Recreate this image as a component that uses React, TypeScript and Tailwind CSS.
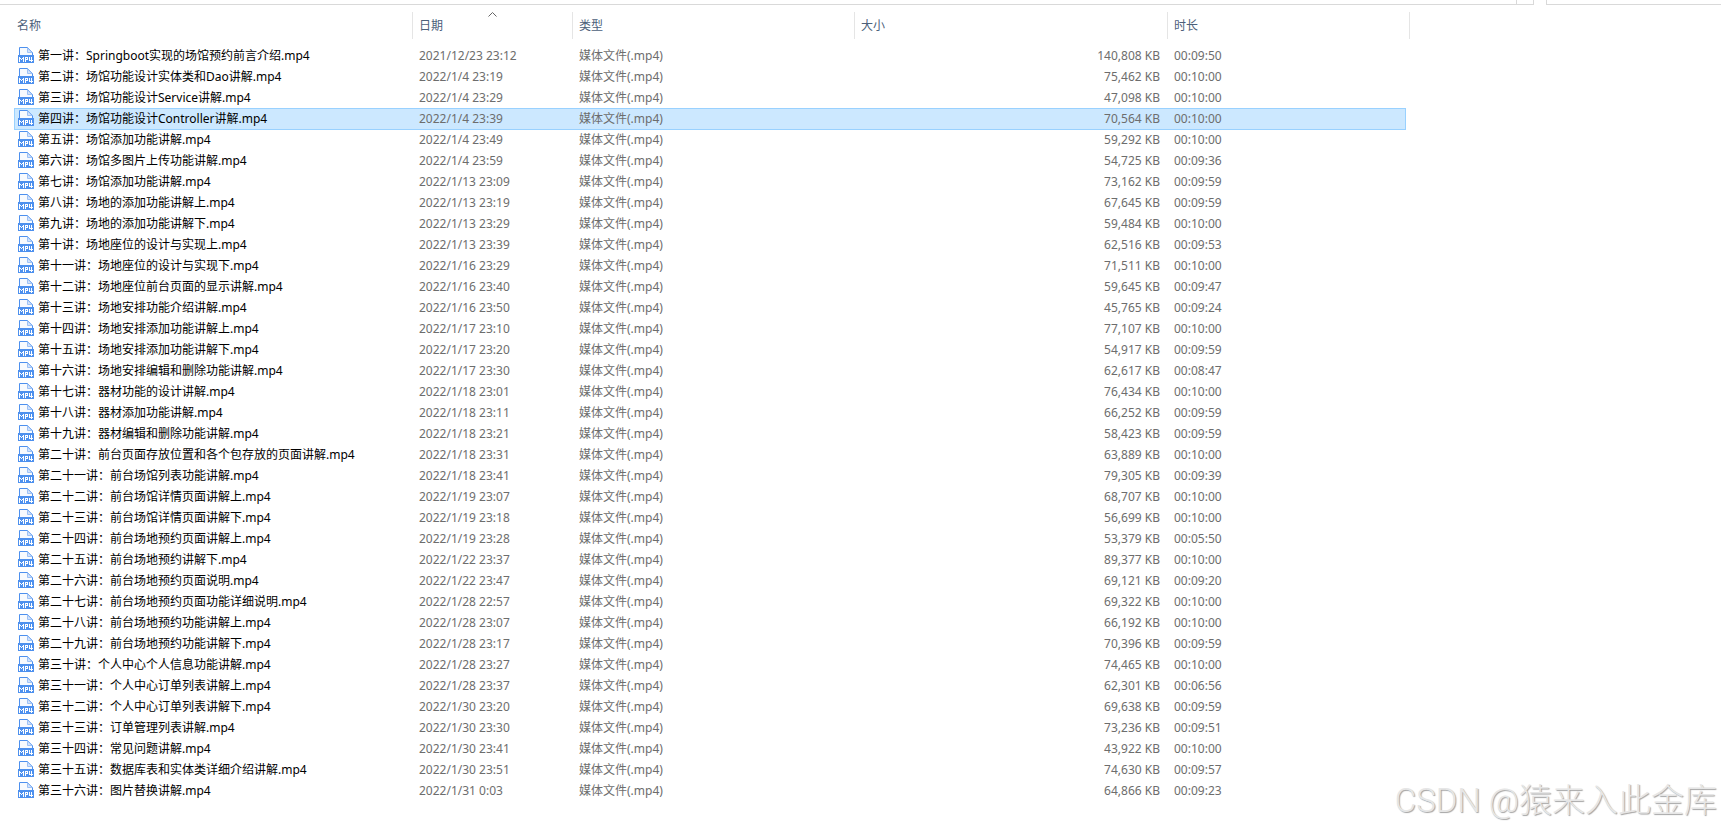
import { useState } from 'react';

interface VideoFile {
  name: string;
  date: string;
  size: string;
  duration: string;
}

const files: VideoFile[] = [
  { name: '第一讲：Springboot实现的场馆预约前言介绍.mp4', date: '2021/12/23 23:12', size: '140,808 KB', duration: '00:09:50' },
  { name: '第二讲：场馆功能设计实体类和Dao讲解.mp4', date: '2022/1/4 23:19', size: '75,462 KB', duration: '00:10:00' },
  { name: '第三讲：场馆功能设计Service讲解.mp4', date: '2022/1/4 23:29', size: '47,098 KB', duration: '00:10:00' },
  { name: '第四讲：场馆功能设计Controller讲解.mp4', date: '2022/1/4 23:39', size: '70,564 KB', duration: '00:10:00' },
  { name: '第五讲：场馆添加功能讲解.mp4', date: '2022/1/4 23:49', size: '59,292 KB', duration: '00:10:00' },
  { name: '第六讲：场馆多图片上传功能讲解.mp4', date: '2022/1/4 23:59', size: '54,725 KB', duration: '00:09:36' },
  { name: '第七讲：场馆添加功能讲解.mp4', date: '2022/1/13 23:09', size: '73,162 KB', duration: '00:09:59' },
  { name: '第八讲：场地的添加功能讲解上.mp4', date: '2022/1/13 23:19', size: '67,645 KB', duration: '00:09:59' },
  { name: '第九讲：场地的添加功能讲解下.mp4', date: '2022/1/13 23:29', size: '59,484 KB', duration: '00:10:00' },
  { name: '第十讲：场地座位的设计与实现上.mp4', date: '2022/1/13 23:39', size: '62,516 KB', duration: '00:09:53' },
  { name: '第十一讲：场地座位的设计与实现下.mp4', date: '2022/1/16 23:29', size: '71,511 KB', duration: '00:10:00' },
  { name: '第十二讲：场地座位前台页面的显示讲解.mp4', date: '2022/1/16 23:40', size: '59,645 KB', duration: '00:09:47' },
  { name: '第十三讲：场地安排功能介绍讲解.mp4', date: '2022/1/16 23:50', size: '45,765 KB', duration: '00:09:24' },
  { name: '第十四讲：场地安排添加功能讲解上.mp4', date: '2022/1/17 23:10', size: '77,107 KB', duration: '00:10:00' },
  { name: '第十五讲：场地安排添加功能讲解下.mp4', date: '2022/1/17 23:20', size: '54,917 KB', duration: '00:09:59' },
  { name: '第十六讲：场地安排编辑和删除功能讲解.mp4', date: '2022/1/17 23:30', size: '62,617 KB', duration: '00:08:47' },
  { name: '第十七讲：器材功能的设计讲解.mp4', date: '2022/1/18 23:01', size: '76,434 KB', duration: '00:10:00' },
  { name: '第十八讲：器材添加功能讲解.mp4', date: '2022/1/18 23:11', size: '66,252 KB', duration: '00:09:59' },
  { name: '第十九讲：器材编辑和删除功能讲解.mp4', date: '2022/1/18 23:21', size: '58,423 KB', duration: '00:09:59' },
  { name: '第二十讲：前台页面存放位置和各个包存放的页面讲解.mp4', date: '2022/1/18 23:31', size: '63,889 KB', duration: '00:10:00' },
  { name: '第二十一讲：前台场馆列表功能讲解.mp4', date: '2022/1/18 23:41', size: '79,305 KB', duration: '00:09:39' },
  { name: '第二十二讲：前台场馆详情页面讲解上.mp4', date: '2022/1/19 23:07', size: '68,707 KB', duration: '00:10:00' },
  { name: '第二十三讲：前台场馆详情页面讲解下.mp4', date: '2022/1/19 23:18', size: '56,699 KB', duration: '00:10:00' },
  { name: '第二十四讲：前台场地预约页面讲解上.mp4', date: '2022/1/19 23:28', size: '53,379 KB', duration: '00:05:50' },
  { name: '第二十五讲：前台场地预约讲解下.mp4', date: '2022/1/22 23:37', size: '89,377 KB', duration: '00:10:00' },
  { name: '第二十六讲：前台场地预约页面说明.mp4', date: '2022/1/22 23:47', size: '69,121 KB', duration: '00:09:20' },
  { name: '第二十七讲：前台场地预约页面功能详细说明.mp4', date: '2022/1/28 22:57', size: '69,322 KB', duration: '00:10:00' },
  { name: '第二十八讲：前台场地预约功能讲解上.mp4', date: '2022/1/28 23:07', size: '66,192 KB', duration: '00:10:00' },
  { name: '第二十九讲：前台场地预约功能讲解下.mp4', date: '2022/1/28 23:17', size: '70,396 KB', duration: '00:09:59' },
  { name: '第三十讲：个人中心个人信息功能讲解.mp4', date: '2022/1/28 23:27', size: '74,465 KB', duration: '00:10:00' },
  { name: '第三十一讲：个人中心订单列表讲解上.mp4', date: '2022/1/28 23:37', size: '62,301 KB', duration: '00:06:56' },
  { name: '第三十二讲：个人中心订单列表讲解下.mp4', date: '2022/1/30 23:20', size: '69,638 KB', duration: '00:09:59' },
  { name: '第三十三讲：订单管理列表讲解.mp4', date: '2022/1/30 23:30', size: '73,236 KB', duration: '00:09:51' },
  { name: '第三十四讲：常见问题讲解.mp4', date: '2022/1/30 23:41', size: '43,922 KB', duration: '00:10:00' },
  { name: '第三十五讲：数据库表和实体类详细介绍讲解.mp4', date: '2022/1/30 23:51', size: '74,630 KB', duration: '00:09:57' },
  { name: '第三十六讲：图片替换讲解.mp4', date: '2022/1/31 0:03', size: '64,866 KB', duration: '00:09:23' },
];

function Mp4Icon() {
  return (
    <svg width="16" height="16" viewBox="0 0 16 16" className="mt-0.5 shrink-0" aria-hidden="true">
      <path d="M1.5 9V0.5H9.5L14.5 5.5V9" fill="#f7fafe" stroke="#4d90ee" />
      <path d="M9.5 1V5.5H14Z" fill="#d3e3fb" stroke="#9cc1f6" />
      <rect y="8" width="16" height="8" fill="#4d90ee" />
      <path
        d="M1.5 15V10M2 11.5H3M3 12.5H4M4 11.5H5M5.5 10V15M7.5 15V10M8 10.5H9M8 12.5H9M9.5 10V13M11.5 10V14M12 13.5H13M13.5 10V15M14 13.5H15"
        fill="none"
        stroke="#fff"
      />
    </svg>
  );
}

export default function App() {
  const [selected, setSelected] = useState(3);

  const th = 'h-[27px] border-r border-[#e5e5e5] pl-1.5 text-left font-normal';

  return (
    <div className="relative min-h-screen overflow-hidden bg-white font-['Noto_Sans','Noto_Sans_CJK_SC',sans-serif] text-[12px] leading-5">
      {/* 地址栏和搜索框的下边缘 */}
      <div className="flex h-[5px] gap-3">
        <div className="flex flex-1 justify-end border-r border-b border-[#d9d9d9]">
          <div className="w-[17px] border-l border-[#d9d9d9]" />
        </div>
        <div className="w-[175px] border-b border-l border-[#d9d9d9]" />
      </div>

      <table className="mt-[7px] ml-[14px] w-[1392px] table-fixed border-separate border-spacing-0">
        <colgroup>
          <col className="w-[399px]" />
          <col className="w-[160px]" />
          <col className="w-[282px]" />
          <col className="w-[313px]" />
          <col />
        </colgroup>
        <thead className="text-[#4c607a]">
          <tr>
            <th className="h-[27px] border-r border-[#e5e5e5] pl-[3px] text-left font-normal">名称</th>
            <th className={`${th} relative`} aria-sort="ascending">
              日期
              <svg width="9" height="5" viewBox="0 0 9 5" className="absolute top-0 left-[75px]" aria-hidden="true">
                <path d="M0.5 4.5L4.5 0.5L8.5 4.5" fill="none" stroke="#666" />
              </svg>
            </th>
            <th className={th}>类型</th>
            <th className={th}>大小</th>
            {/* 分隔线比行的右边缘再靠右一点 */}
            <th className="relative pl-1.5 text-left font-normal after:absolute after:inset-y-0 after:-right-1 after:border-r after:border-[#e5e5e5]">
              时长
            </th>
          </tr>
          <tr aria-hidden="true">
            <td colSpan={5} className="h-[6px]" />
          </tr>
        </thead>
        <tbody className="text-[#6d6d6d]">
          {files.map((file, index) => {
            const active = index === selected;
            return (
              <tr
                key={file.name}
                onClick={() => setSelected(index)}
                className={
                  active
                    ? 'bg-[#cce8ff] align-top shadow-[inset_1px_1px_#99d1ff,inset_-1px_0_#99d1ff,0_1px_#99d1ff]'
                    : 'align-top hover:bg-[#e5f3ff]'
                }
              >
                <td className="h-[21px] pl-1 text-black">
                  <div className="flex items-start gap-1 whitespace-nowrap">
                    <Mp4Icon />
                    <span className="pt-px">{file.name}</span>
                  </div>
                </td>
                <td className="pt-px pl-1.5 whitespace-nowrap">{file.date}</td>
                <td className="pt-px pl-1.5 whitespace-nowrap">媒体文件(.mp4)</td>
                <td className="pt-px pr-2 text-right whitespace-nowrap">{file.size}</td>
                <td className="pt-px pl-1.5 whitespace-nowrap">{file.duration}</td>
              </tr>
            );
          })}
        </tbody>
      </table>

      <div className="absolute right-1 bottom-2 font-['Roboto','Noto_Sans_CJK_SC',sans-serif] text-[33px] leading-[44px] font-light whitespace-nowrap text-[#e6e6e6] [text-shadow:1px_1px_1px_#a3a3a3]">
        CSDN @猿来入此金库
      </div>
    </div>
  );
}
